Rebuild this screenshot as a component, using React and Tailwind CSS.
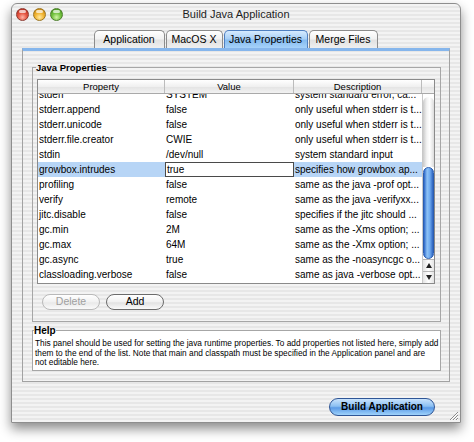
import React from 'react';

const rows = [
    ['stderr', 'SYSTEM', 'system standard error, ca...'],
    ['stderr.append', 'false', 'only useful when stderr is t...'],
    ['stderr.unicode', 'false', 'only useful when stderr is t...'],
    ['stderr.file.creator', 'CWIE', 'only useful when stderr is t...'],
    ['stdin', '/dev/null', 'system standard input'],
    ['growbox.intrudes', 'true', 'specifies how growbox ap...'],
    ['profiling', 'false', 'same as the java -prof opt...'],
    ['verify', 'remote', 'same as the java -verifyxx...'],
    ['jitc.disable', 'false', 'specifies if the jitc should ...'],
    ['gc.min', '2M', 'same as the -Xms option; ...'],
    ['gc.max', '64M', 'same as the -Xmx option; ...'],
    ['gc.async', 'true', 'same as the -noasyncgc o...'],
    ['classloading.verbose', 'false', 'same as java -verbose opt...'],
];

const stripes = 'bg-[repeating-linear-gradient(180deg,#f3f3f3_0px,#f3f3f3_2px,#e7e7e7_2px,#e7e7e7_4px)]';

function Light({ tone }) {
    const colors = {
        red: 'bg-[radial-gradient(circle_at_50%_75%,#ffb4a6_0%,#e4533f_45%,#a8241a_100%)] border-[#8e3a30]',
        yellow: 'bg-[radial-gradient(circle_at_50%_75%,#ffe9a0_0%,#f1b431_45%,#b97a10_100%)] border-[#9a7420]',
        green: 'bg-[radial-gradient(circle_at_50%_75%,#d2f5a6_0%,#72c13e_45%,#3f8a1a_100%)] border-[#4c7e2c]',
    };
    return (
        <div className={`w-[13px] h-[13px] rounded-full border flex justify-center ${colors[tone]}`}>
            <div className="w-[7px] h-[3px] mt-[1px] rounded-full bg-white/70" />
        </div>
    );
}

function Tab({ label, width, active }) {
    return (
        <div
            className={
                active
                    ? `${width} h-[18px] rounded-t-[5px] border border-b-0 border-[#4f7fc0] bg-[linear-gradient(180deg,#d6ebff_0%,#a9d0f6_45%,#86bcf0_55%,#a6d2fa_100%)] flex items-center justify-center text-[10.5px] text-black`
                    : `${width} h-[18px] rounded-t-[5px] border border-b-0 border-[#8c8c8c] bg-[linear-gradient(180deg,#ffffff_0%,#f2f2f2_45%,#e2e2e2_55%,#efefef_100%)] flex items-center justify-center text-[10.5px] text-black`
            }
        >
            {label}
        </div>
    );
}

function Pill({ label, disabled }) {
    return (
        <div
            className={
                disabled
                    ? 'w-[58px] h-[16px] rounded-full border border-[#b9b9b9] bg-[linear-gradient(180deg,#ffffff,#f1f1f1_50%,#e9e9e9_55%,#fafafa)] flex items-center justify-center text-[10.5px] text-[#a0a0a0]'
                    : 'w-[58px] h-[16px] rounded-full border border-[#6b6b6b] bg-[linear-gradient(180deg,#ffffff,#f1f1f1_50%,#e2e2e2_55%,#fafafa)] flex items-center justify-center text-[10.5px] text-black'
            }
        >
            {label}
        </div>
    );
}

function Arrow({ up }) {
    return (
        <div className="h-[12px] flex items-center justify-center border-t border-[#b5b5b5] bg-[linear-gradient(90deg,#e4e4e4,#ffffff_50%,#e4e4e4)]">
            <svg width="6" height="5" viewBox="0 0 6 5">
                {up ? <path d="M3 0 L6 5 L0 5 Z" fill="#222" /> : <path d="M0 0 L6 0 L3 5 Z" fill="#222" />}
            </svg>
        </div>
    );
}

function PropertiesTable() {
    return (
        <div className="w-[398px] border border-[#8a8a8a] bg-white">
            {/* header */}
            <div className="flex h-[14px] border-b border-[#a9a9a9] bg-[linear-gradient(180deg,#ffffff,#f0f0f0_50%,#e4e4e4_55%,#f2f2f2)] text-[9.5px] leading-[13px]">
                <div className="w-[127px] border-r border-[#bcbcbc] text-center">Property</div>
                <div className="w-[129px] border-r border-[#bcbcbc] text-center">Value</div>
                <div className="w-[128px] border-r border-[#bcbcbc] text-center">Description</div>
                <div className="w-[12px]" />
            </div>
            {/* body, scrolled a few pixels down */}
            <div className="flex h-[189px]">
                <div className="w-[384px] overflow-hidden">
                    <div className="-mt-[7px]">
                        {rows.map(([k, v, d]) => {
                            const sel = k === 'growbox.intrudes';
                            return (
                                <div key={k} className="flex h-[15px] text-[10px] leading-[15px] text-black whitespace-nowrap">
                                    <div className={`w-[127px] pl-[1px] overflow-hidden ${sel ? 'bg-[#b7d5f6]' : ''}`}>{k}</div>
                                    {sel ? (
                                        <div className="w-[129px] pl-[1px] border border-[#4a4a4a] bg-white leading-[13px]">{v}</div>
                                    ) : (
                                        <div className="w-[129px] pl-[1px] overflow-hidden">{v}</div>
                                    )}
                                    <div className={`w-[128px] pl-[1px] overflow-hidden ${sel ? 'bg-[#b7d5f6]' : ''}`}>{d}</div>
                                </div>
                            );
                        })}
                    </div>
                </div>
                {/* scrollbar */}
                <div className="w-[12px] flex flex-col border-l border-[#c8c8c8]">
                    <div className="flex-1 pt-[3px] flex flex-col">
                        <div className="flex-1 rounded-t-full bg-[linear-gradient(90deg,#c9c9c9,#f3f3f3_35%,#ffffff_60%,#dcdcdc)]" />
                        <div className="h-[92px] rounded-full border border-[#2a5db0] bg-[linear-gradient(90deg,#2b66c8,#8fc3f6_35%,#6eaaf0_65%,#2d63bf)]" />
                    </div>
                    <Arrow up />
                    <Arrow />
                </div>
            </div>
        </div>
    );
}

export default function App() {
    return (
        <div className="min-h-[442px] bg-white pt-[3px] pl-[11px] font-['Liberation_Sans',Arial,sans-serif]">
            <div className={`w-[450px] h-[420px] rounded-t-[6px] border border-[#8e8e8e] shadow-[0_6px_12px_rgba(0,0,0,0.45)] flex flex-col ${stripes}`}>
                {/* title bar */}
                <div className="h-[21px] grid grid-cols-[1fr_auto_1fr] items-center">
                    <div className="flex items-center gap-[4px] pl-[4px]">
                        <Light tone="red" />
                        <Light tone="yellow" />
                        <Light tone="green" />
                    </div>
                    <div className="text-[11px] text-[#1c1c1c]">Build Java Application</div>
                    <div />
                </div>

                {/* tabs */}
                <div className="mt-[5px] flex justify-center gap-[1px] pr-[1px]">
                    <Tab label="Application" width="w-[71px]" />
                    <Tab label="MacOS X" width="w-[57px]" />
                    <Tab label="Java Properties" width="w-[84px]" active />
                    <Tab label="Merge Files" width="w-[69px]" />
                </div>

                {/* tab panel */}
                <div className="mx-[10px] border-x border-b border-[#a2a2a2] border-t-[3px] border-t-[#86b6ec] pt-[11px] pl-[9px] pr-[8px] pb-[10px]">
                    <fieldset className="border border-[#a6a6a6]">
                        <legend className="ml-[3px] text-[9.5px] font-bold leading-[11px]">Java Properties</legend>
                        <div className="pl-[4px] pt-[6px]">
                            <PropertiesTable />
                            <div className="mt-[10px] pl-[5px] pb-[11px] flex gap-[6px]">
                                <Pill label="Delete" disabled />
                                <Pill label="Add" />
                            </div>
                        </div>
                    </fieldset>

                    <fieldset className="mt-[3px] border border-[#a6a6a6] bg-white">
                        <legend className="ml-[1px] text-[10px] font-bold leading-[11px]">Help</legend>
                        <p className="pl-[2px] pt-[3px] pb-[2px] text-[8.3px] leading-[9.5px] text-black whitespace-nowrap">
                            This panel should be used for setting the java runtime properties. To add properties not listed here, simply add
                            <br />
                            them to the end of the list. Note that main and classpath must be specified in the Application panel and are
                            <br />
                            not editable here.
                        </p>
                    </fieldset>
                </div>

                {/* bottom */}
                <div className="flex-1 flex justify-end items-start pt-[16px]">
                    <div className="mr-[13px] w-[106px] h-[18px] rounded-full border border-[#2e5596] bg-[linear-gradient(180deg,#c9e3fc_0%,#8cc0f2_45%,#5b9ae6_55%,#9ed2fb_100%)] flex items-center justify-center text-[10px] font-bold text-black">
                        Build Application
                    </div>
                    <svg width="11" height="11" viewBox="0 0 11 11" className="self-end mb-[1px] mr-[1px]">
                        <path d="M10 2 L2 10 M10 5 L5 10 M10 8 L8 10" stroke="#8a8a8a" strokeWidth="1" />
                        <path d="M10 3 L3 10 M10 6 L6 10 M10 9 L9 10" stroke="#ffffff" strokeWidth="1" />
                    </svg>
                </div>
            </div>
        </div>
    );
}
